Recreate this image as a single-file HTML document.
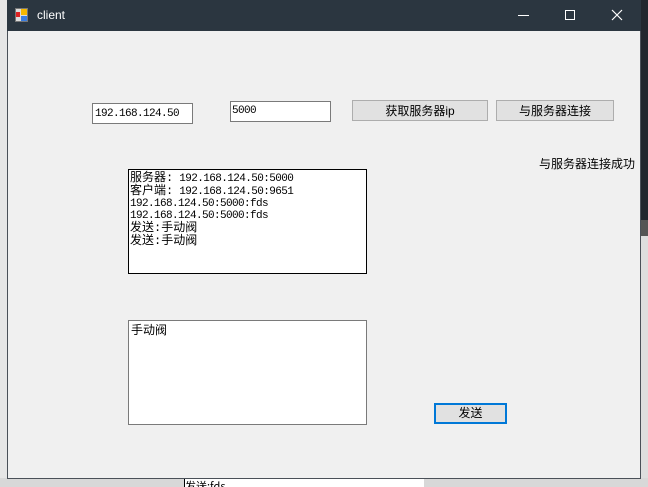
<!DOCTYPE html><html><head><style>
*{margin:0;padding:0;box-sizing:border-box}
html,body{width:648px;height:487px;overflow:hidden}
body{background:#e6e6e6;position:relative;font-family:"SimSun","Noto Sans CJK SC","Liberation Mono",monospace;font-size:12px;color:#000}
.a{position:absolute}
.tb{background:#fff;border:1px solid #7a7a7a}
.btn{background:#e1e1e1;border:1px solid #adadad;text-align:center;line-height:20px;font-family:"Liberation Sans","Noto Sans CJK SC",sans-serif;font-size:12px}
.m{font-family:"Liberation Mono","Noto Sans CJK SC",monospace;font-size:11px;line-height:12px;letter-spacing:-0.6px}
.c{font-size:12px;letter-spacing:0}
</style></head><body>
<div class="a" style="left:641px;top:0;width:7px;height:220px;background:#22272e"></div>
<div class="a" style="left:641px;top:220px;width:7px;height:16px;background:#555"></div>
<div class="a" style="left:641px;top:236px;width:7px;height:251px;background:#dedede"></div>
<div class="a" style="left:0;top:478px;width:648px;height:9px;background:#d8d8d8"></div>
<div class="a" style="left:184px;top:479px;width:240px;height:8px;background:#fff;border-left:1px solid #000;font-size:11px;line-height:14px;overflow:hidden">发送:fds</div>
<div class="a" style="left:7px;top:0;width:634px;height:479px;background:#f0f0f0;border:1px solid #4a5058;border-top:none"></div>
<div class="a" style="left:7px;top:0;width:634px;height:31px;background:#2b3640"></div>
<div class="a" style="left:15px;top:8px;width:13px;height:14px">
<div class="a" style="left:0;top:0;width:13px;height:14px;background:#ddd;border:1px solid #777"></div>
<div class="a" style="left:6px;top:1px;width:6px;height:6px;background:#f5b800"></div>
<div class="a" style="left:1px;top:4px;width:4px;height:5px;background:#d22"></div>
<div class="a" style="left:6px;top:8px;width:6px;height:5px;background:#3a7de0"></div></div>
<div class="a" style="left:37px;top:8px;color:#fff;font-family:'Liberation Sans',sans-serif;font-size:12px">client</div>
<div class="a" style="left:518px;top:15px;width:11px;height:1px;background:#fff"></div>
<div class="a" style="left:565px;top:10px;width:10px;height:10px;border:1px solid #fff"></div>
<svg class="a" style="left:611px;top:9px" width="12" height="12"><path d="M1 1L11 11M11 1L1 11" stroke="#fff" stroke-width="1.2"/></svg>
<div class="a tb m" style="left:92px;top:103px;width:101px;height:21px;padding:3px 2px;line-height:14px">192.168.124.50</div>
<div class="a tb m" style="left:230px;top:101px;width:101px;height:21px;padding:2px 1px;line-height:14px">5000</div>
<div class="a btn" style="left:352px;top:100px;width:136px;height:21px">获取服务器ip</div>
<div class="a btn" style="left:496px;top:100px;width:118px;height:21px">与服务器连接</div>
<div class="a" style="left:539px;top:155px;font-family:'Liberation Sans','Noto Sans CJK SC',sans-serif;font-size:12px">与服务器连接成功</div>
<div class="a m" style="left:128px;top:169px;width:239px;height:105px;background:#fff;border:1px solid #000;padding:2px 1px"><span class="c">服务器:</span> 192.168.124.50:5000<br><span class="c">客户端:</span> 192.168.124.50:9651<br>192.168.124.50:5000:fds<br>192.168.124.50:5000:fds<br><span class="c">发送:手动阀</span><br><span class="c">发送:手动阀</span></div>
<div class="a m" style="left:128px;top:320px;width:239px;height:105px;background:#fff;border:1px solid #7a7a7a;padding:3px 2px;line-height:14px"><span class="c">手动阀</span></div>
<div class="a btn" style="left:434px;top:403px;width:73px;height:21px;border:2px solid #0078d7;line-height:17px">发送</div>
</body></html>
